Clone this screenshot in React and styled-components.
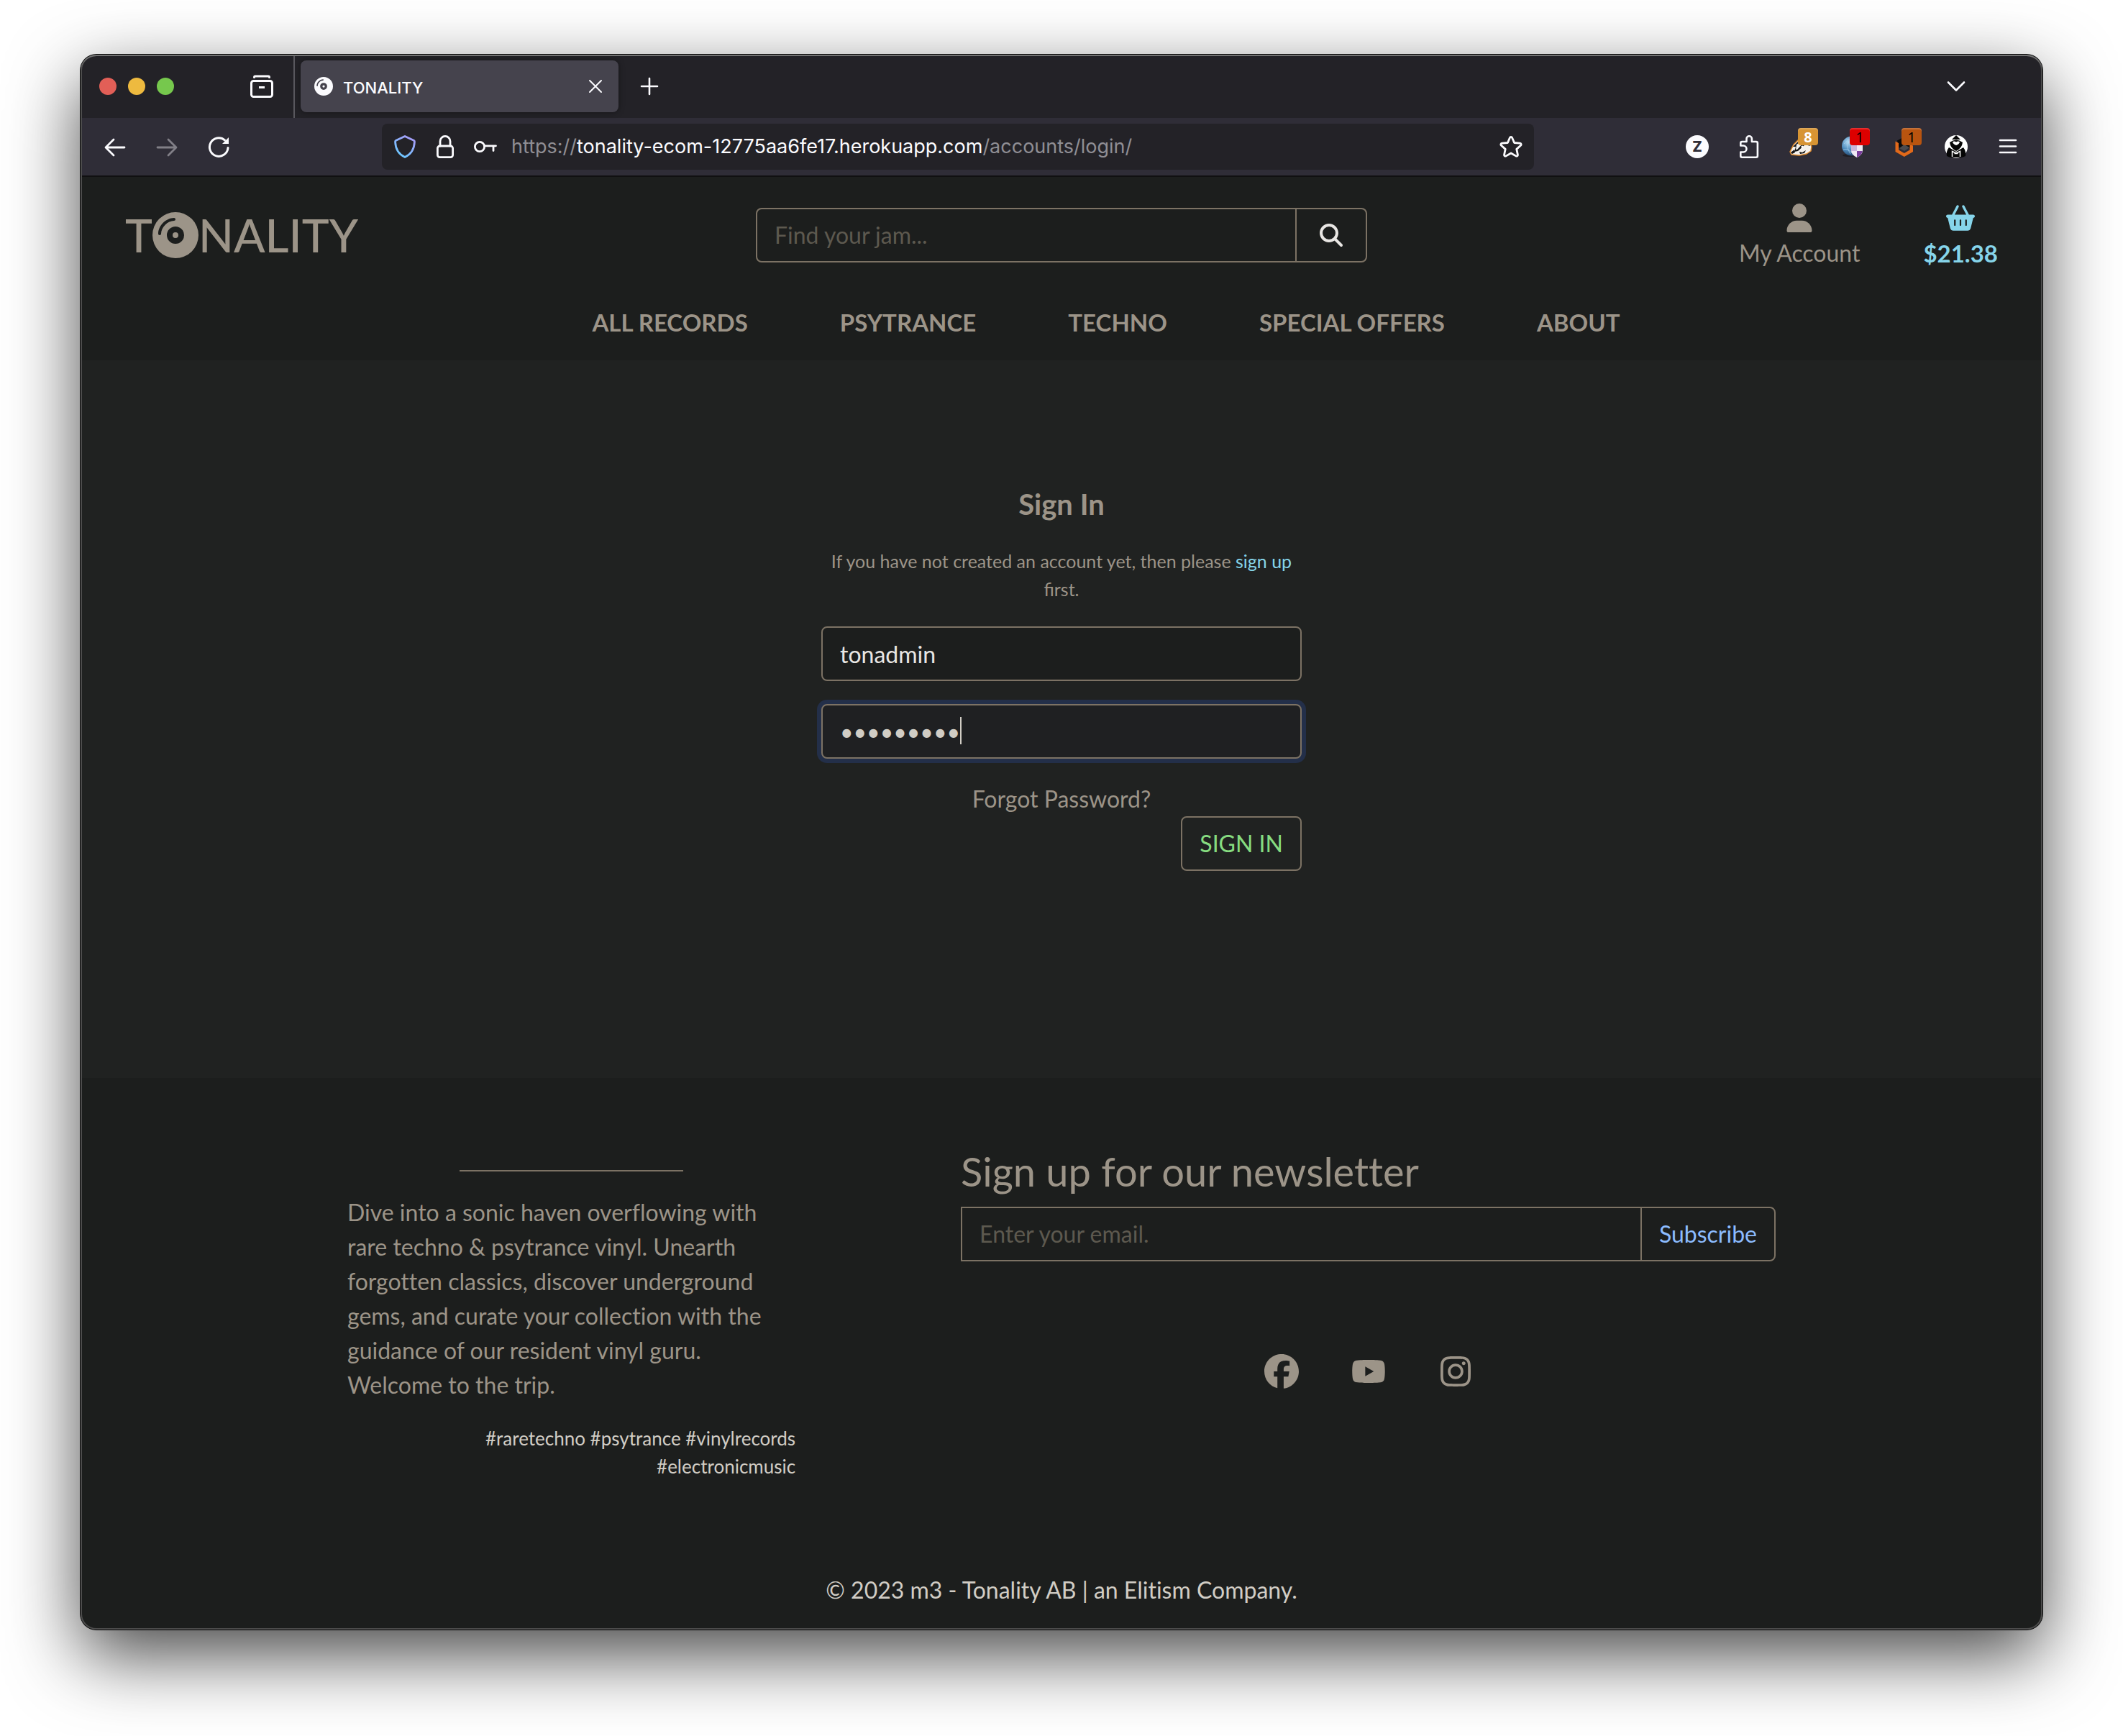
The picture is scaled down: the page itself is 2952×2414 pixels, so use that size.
import React from "react";
import styled, { createGlobalStyle } from "styled-components";
import {
  FaBasketShopping,
  FaCompactDisc,
  FaFacebook,
  FaInstagram,
  FaMagnifyingGlass,
  FaUser,
  FaYoutube,
} from "react-icons/fa6";

const color = {
  tabStrip: "#232227",
  toolbar: "#2f2d37",
  tab: "#45434d",
  chromeText: "#fbfbfe",
  chromeMuted: "#8f8e94",
  surface: "#1c1e1d",
  page: "#202221",
  text: "#9c9488",
  light: "#d1cdc5",
  bright: "#e8e6e3",
  placeholder: "#5d594f",
  line: "#7c7264",
  sky: "#86d5ea",
  green: "#86dc80",
  blue: "#8cbcff",
};

const GlobalStyle = createGlobalStyle`
  *, *::before, *::after { box-sizing: border-box; }
  body { margin: 0; background: #fff; }
  h1, h2, p { margin: 0; font-weight: inherit; }
  a { color: inherit; text-decoration: none; }
  button, input { font: inherit; color: inherit; margin: 0; }
  button { background: none; border: 0; padding: 0; cursor: pointer; }
  svg { display: block; flex: none; }
`;

const Desktop = styled.div`
  padding: 76px 112px 148px;
`;

const Window = styled.div`
  position: relative;
  border-radius: 22px;
  overflow: hidden;
  color: ${color.text};
  background: ${color.surface};
  font: 400 32px/48px Lato, sans-serif;
  font-variant-ligatures: no-common-ligatures;
  &::after {
    content: "";
    position: absolute;
    inset: 0;
    border-radius: 22px;
    pointer-events: none;
    box-shadow: inset 0 2px 0 0 #737373, inset 0 0 0 2px #4c4c4c;
  }
`;

const Shadow = styled.div`
  border-radius: 22px;
  box-shadow: 0 0 0 1px #050505, 0 36px 100px rgba(0, 0, 0, 0.72);
`;

/* Browser chrome */

const TabStrip = styled.div`
  display: flex;
  align-items: center;
  height: 88px;
  padding: 0 104px 0 26px;
  background: ${color.tabStrip};
  color: ${color.chromeText};
  font: 500 22px/32px Inter, sans-serif;
`;

const Lights = styled.div`
  display: flex;
  gap: 16px;
  margin-right: 106px;
`;

const Light = styled.button`
  width: 24px;
  height: 24px;
  border-radius: 50%;
  background: ${(p) => p.$fill};
`;

const IconButton = styled.button`
  position: relative;
  display: grid;
  place-items: center;
  flex: none;
  width: 32px;
  height: 32px;
  opacity: ${(p) => (p.$dim ? 0.4 : 1)};
`;

const StripDivider = styled.div`
  align-self: stretch;
  width: 2px;
  margin: 0 8px 0 28px;
  background: #59585e;
`;

const Tab = styled.div`
  display: flex;
  align-items: center;
  gap: 14px;
  width: 442px;
  height: 72px;
  margin-right: 27px;
  padding: 0 16px 0 19px;
  border-radius: 8px;
  background: ${color.tab};
  box-shadow: 0 0 8px rgba(0, 0, 0, 0.4);
`;

const TabTitle = styled.span`
  flex: 1;
  padding-top: 4px;
`;

const Push = styled.div`
  flex: 1;
`;

const Toolbar = styled.div`
  display: flex;
  align-items: center;
  height: 82px;
  padding: 0 32px;
  background: ${color.toolbar};
  color: ${color.chromeText};
  border-bottom: 2px solid #101011;
`;

const ToolGroup = styled.div`
  display: flex;
  gap: 40px;
`;

const AddressBar = styled.div`
  display: flex;
  align-items: center;
  gap: 20px;
  flex: 1;
  height: 64px;
  margin: 0 211px;
  padding: 0 16px;
  border-radius: 8px;
  background: ${color.tabStrip};
`;

const SiteIcons = styled.div`
  display: flex;
  gap: 24px;
`;

const Url = styled.div`
  flex: 1;
  overflow: hidden;
  white-space: nowrap;
  font: 400 27px/40px Inter, sans-serif;
  color: ${color.chromeMuted};
`;

const Host = styled.span`
  color: ${color.chromeText};
`;

const Badge = styled.span`
  position: absolute;
  left: 12px;
  top: -10px;
  width: 28px;
  height: 24px;
  border-radius: 4px;
  background: ${(p) => p.$fill};
  color: ${(p) => p.$ink};
  box-shadow: inset 0 2px 0 rgba(255, 255, 255, 0.18);
  font: ${(p) => p.$weight} 20px/25px "Noto Sans", sans-serif;
  text-align: center;
`;

const Initial = styled.span`
  display: grid;
  place-items: center;
  width: 32px;
  height: 32px;
  border-radius: 50%;
  background: ${color.chromeText};
  color: ${color.toolbar};
  font: 800 20px/32px Inter, sans-serif;
`;

/* Shop header */

const Header = styled.header`
  padding: 32px 62px 29px;
  background: ${color.surface};
`;

const HeaderRow = styled.div`
  display: grid;
  grid-template-columns: 1fr minmax(0, 850px) 1fr;
  align-items: center;
`;

const Logo = styled.a`
  display: flex;
  align-items: center;
  font-size: 64px;
  font-weight: 500;
  line-height: 76px;
`;

const FieldGroup = styled.form`
  display: flex;
  height: 76px;
  border: 2px solid ${color.line};
  border-radius: ${(p) => (p.$squareLeft ? "0 8px 8px 0" : "8px")};
`;

const GroupInput = styled.input`
  flex: 1;
  min-width: 0;
  padding: 0 24px;
  border: 0;
  outline: 0;
  background: transparent;
  color: ${color.bright};
  &::placeholder {
    color: ${color.placeholder};
    opacity: 1;
  }
`;

const GroupButton = styled.button`
  display: grid;
  place-items: center;
  padding: 0 ${(p) => (p.$wide ? 32 : 24)}px;
  border-left: 2px solid ${color.line};
  color: ${(p) => p.$ink};
`;

const Shortcuts = styled.div`
  display: flex;
  justify-content: flex-end;
  gap: 88px;
`;

const Shortcut = styled.a`
  display: flex;
  flex-direction: column;
  align-items: center;
  color: ${(p) => (p.$active ? color.sky : color.text)};
  font-size: ${(p) => (p.$active ? 33 : 32)}px;
  font-weight: ${(p) => (p.$active ? 700 : 400)};
`;

const ShortcutIcon = styled.span`
  display: grid;
  place-items: center;
  height: 50px;
`;

const Nav = styled.nav`
  display: flex;
  justify-content: center;
  gap: 128px;
  padding: 48px 0 0 124px;
  font-size: 33px;
  font-weight: 700;
`;

/* Sign-in */

const Main = styled.main`
  padding: 176px 0 288px;
  background: ${color.page};
`;

const SignIn = styled.form`
  display: flex;
  flex-direction: column;
  align-items: center;
  width: 668px;
  margin: 0 auto;
`;

const Title = styled.h1`
  font-size: 40px;
  font-weight: 700;
`;

const Hint = styled.p`
  margin: 36px 0 32px;
  font-size: 25px;
  font-variant-ligatures: normal;
  line-height: 39px;
  text-align: center;
  a {
    color: ${color.sky};
  }
`;

const Field = styled.label`
  position: relative;
  display: block;
  width: 100%;
  margin-bottom: 32px;
`;

const TextInput = styled.input`
  display: block;
  width: 100%;
  height: 76px;
  padding: 0 24px;
  border: 2px solid ${color.line};
  border-radius: 8px;
  outline: 0;
  background: ${(p) => (p.$focused ? "#1f2022" : color.surface)};
  color: ${(p) => (p.$focused ? color.light : color.bright)};
  box-shadow: ${(p) => (p.$focused ? "0 0 0 6px #232f49" : "none")};
`;

const Caret = styled.span`
  position: absolute;
  left: 193px;
  top: 18px;
  width: 2px;
  height: 38px;
  background: ${color.light};
`;

const SubmitButton = styled.button`
  align-self: flex-end;
  height: 76px;
  padding: 0 24px;
  border: 2px solid ${color.line};
  border-radius: 8px;
  color: ${color.green};
`;

/* Footer */

const Footer = styled.footer`
  padding: 96px 0 31px;
  background: ${color.surface};
`;

const FooterGrid = styled.div`
  display: grid;
  grid-template-columns: 11fr 20fr;
  gap: 230px;
  padding: 0 13.6%;
`;

const About = styled.section`
  padding-top: 32px;
`;

const Rule = styled.hr`
  width: 50%;
  height: 2px;
  margin: 0 auto 33px;
  border: 0;
  background: ${color.line};
`;

const Tags = styled.p`
  margin-top: 31px;
  color: ${color.light};
  font-size: 26px;
  line-height: 39px;
  text-align: right;
`;

const NewsletterTitle = styled.h2`
  margin-bottom: 16px;
  font-size: 56px;
  line-height: 67px;
`;

const Socials = styled.div`
  display: flex;
  justify-content: center;
  gap: 73px;
  margin-top: 129px;
  font-size: 48px;
`;

const Copyright = styled.p`
  margin-top: 128px;
  color: ${color.light};
  text-align: center;
`;

/* Icons */

const Line = ({ size = 32, width = 3, children, ...rest }) => (
  <svg
    width={size}
    height={size}
    viewBox="0 0 32 32"
    fill="none"
    stroke="currentColor"
    strokeWidth={width}
    strokeLinecap="round"
    strokeLinejoin="round"
    {...rest}
  >
    {children}
  </svg>
);

const Archive = () => (
  <Line>
    <path d="M5.500 3.500Q5.500 2 7 2h18Q26.500 2 26.500 3.500" />
    <rect x="1.500" y="8.500" width="29" height="22" rx="3" />
    <path d="M12 17.500h8" strokeLinecap="butt" />
  </Line>
);

const Reload = () => (
  <Line>
    <path d="M29 17.500A12.800 12.800 0 1 1 24.500 6.800" />
    <path d="M30 3V12H21Z" fill="currentColor" stroke="none" />
  </Line>
);

const Shield = () => (
  <svg width="32" height="32" viewBox="0 0 32 32" fill="none">
    <defs>
      <linearGradient id="shieldStroke" x1="24" y1="2" x2="8" y2="26" gradientUnits="userSpaceOnUse">
        <stop offset="0" stopColor="#a79cf8" />
        <stop offset="1" stopColor="#6fc5ff" />
      </linearGradient>
    </defs>
    <path
      d="M16 1.500L28.300 7.200Q29.600 8 29.400 9.500C29 19 24.500 26.500 16 30.500C7.500 26.500 3 19 2.600 9.500Q2.400 8 3.700 7.200Z"
      stroke="url(#shieldStroke)"
      strokeWidth="2.800"
      strokeLinejoin="round"
    />
  </svg>
);

const Lock = () => (
  <Line width={2.8}>
    <rect x="5.400" y="15" width="21.200" height="15.600" rx="3" />
    <path d="M9 15V8.400a7 7 0 0 1 14 0V15" />
  </Line>
);

const Key = () => (
  <Line width={2.8}>
    <circle cx="8" cy="16" r="6.600" />
    <path d="M14.600 14.800H30.500M27 15v6.500" />
  </Line>
);

const Star = () => (
  <Line width={2.8}>
    <path d="M16 2.300c.8 0 1.300.5 1.600 1.200l3 7 7.700.7c1.700.2 2.400 1.800 1.200 3l-5.700 5.200 1.600 7.700c.3 1.600-1.200 2.600-2.600 1.800L16 25l-6.800 3.900c-1.400.8-2.900-.2-2.600-1.800l1.600-7.700-5.700-5.200c-1.200-1.200-.5-2.800 1.200-3l7.700-.7 3-7c.3-.7.8-1.200 1.600-1.200z" />
  </Line>
);

const Puzzle = () => (
  <Line width={2.6}>
    <path d="M4.300 14.500V11a2 2 0 0 1 2-2H12.500V5a3.700 3.700 0 0 1 7.400 0V9h6a2 2 0 0 1 2 2v17.700a2 2 0 0 1-2 2H6.300a2 2 0 0 1-2-2V23.500H8a4.500 4.500 0 0 0 0-9Z" />
  </Line>
);

const Badger = () => (
  <svg width="32" height="32" viewBox="0 0 32 32">
    <path d="M1 23L6 13L14 5L27 7L31 16L30 22L24 26L14 28L3 27Z" fill="#f4f1ec" stroke="#e08a2c" strokeWidth="1.500" strokeLinejoin="round" />
    <path d="M5 16L14 7L25 8L29 15L22 13L12 22L7 23L9 16Z" fill="#151414" />
    <path d="M10 13L17 8L20 10L11 20L9 20Z" fill="#f4f1ec" />
    <path d="M2 24l5-4 1 4-4 2zM14 23l4 1 5-3-2 4-6 1z" fill="#151414" />
    <circle cx="18" cy="16" r="1.600" fill="#fff" />
  </svg>
);

const Globe = () => (
  <svg width="32" height="32" viewBox="0 0 32 32">
    <defs>
      <radialGradient id="globeFill" cx=".35" cy=".3" r=".8">
        <stop offset="0" stopColor="#b5dcf4" />
        <stop offset=".5" stopColor="#4f8dc0" />
        <stop offset="1" stopColor="#17375e" />
      </radialGradient>
    </defs>
    <ellipse cx="12" cy="28" rx="10" ry="2" fill="#1f1e25" />
    <circle cx="14.500" cy="15" r="13.500" fill="url(#globeFill)" />
    <path d="M4 12q5-7 12-8M3 20q8-2 12 5M9 6q-3 9 4 20" fill="none" stroke="#a9d1ec" strokeWidth="1" opacity=".7" />
    <path d="M14 14q8-3 16 0v8q-1 6-8 9-7-3-8-9z" fill="#efe9f3" />
    <path d="M14 14q4-1.500 8-1.500V22h-8z" fill="#c9b6da" />
    <path d="M22 22h7.800q-1 6-7.800 9z" fill="#7b3f9c" />
  </svg>
);

const Hexagon = () => (
  <svg width="32" height="32" viewBox="0 0 32 32">
    <path d="M6 7.500L16 2L28 8V20L16 14L9 18Z" fill="#0b0b0b" />
    <path d="M9 18L16 13L23 17L16 22Z" fill="#4b4b4f" />
    <path d="M3.500 8.500L8 11V20.500L15.800 25L23.500 20.500V12L28 14.500V23L15.800 30L3.500 23Z" fill="#e2691a" />
  </svg>
);

const Cloak = () => (
  <svg width="32" height="32" viewBox="0 0 32 32">
    <circle cx="16" cy="16" r="16" fill="#fff" />
    <path d="M16 0L22 6H10Z" fill="#050505" />
    <path d="M7 10Q16 3 25 10Q24 18 16 22Q8 18 7 10Z" fill="#050505" />
    <path d="M11 9.500Q13 7.500 16 9.500Q19 7.500 21 9.500Q20 12.500 16 14Q12 12.500 11 9.500Z" fill="#fff" />
    <path d="M6 17L16 23L26 17Q30 22 29 29Q25 31 23 31H9Q7 31 3 29Q2 22 6 17Z" fill="#050505" />
    <path d="M10.500 30V22.500L16 25L21.500 22.500V30M13.500 25.500h5" fill="none" stroke="#fff" strokeWidth="1.500" />
  </svg>
);

const tools = [
  { label: "Extensions", icon: <Puzzle /> },
  { label: "Privacy Badger", icon: <Badger />, badge: { text: "8", $fill: "#d79433", $ink: "#fff", $weight: 700 } },
  { label: "Site protection", icon: <Globe />, badge: { text: "1", $fill: "#dd0000", $ink: "#000", $weight: 400 } },
  { label: "Blocker", icon: <Hexagon />, badge: { text: "1", $fill: "#b9540f", $ink: "#000", $weight: 400 } },
  { label: "Incognito cloak", icon: <Cloak /> },
];

const links = ["ALL RECORDS", "PSYTRANCE", "TECHNO", "SPECIAL OFFERS", "ABOUT"];

function BrowserChrome() {
  return (
    <>
      <TabStrip>
        <Lights>
          <Light $fill="#e25f57" aria-label="Close window" />
          <Light $fill="#eeba3f" aria-label="Minimize window" />
          <Light $fill="#76c84d" aria-label="Zoom window" />
        </Lights>
        <IconButton aria-label="Recent tabs"><Archive /></IconButton>
        <StripDivider />
        <Tab>
          <FaCompactDisc size={26} />
          <TabTitle>TONALITY</TabTitle>
          <IconButton aria-label="Close tab">
            <Line width={2}><path d="M8 8l16 16M24 8L8 24" /></Line>
          </IconButton>
        </Tab>
        <IconButton aria-label="New tab">
          <Line width={2.6}><path d="M16 5v22M5 16h22" /></Line>
        </IconButton>
        <Push />
        <IconButton aria-label="List all tabs">
          <Line width={2.6}><path d="M5 10.500l11 11 11-11" /></Line>
        </IconButton>
      </TabStrip>
      <Toolbar>
        <ToolGroup>
          <IconButton aria-label="Back">
            <Line width={2.8}><path d="M29 17H3.500M14 6L3 17l11 11" /></Line>
          </IconButton>
          <IconButton $dim aria-label="Forward">
            <Line width={2.8}><path d="M3 17h25.500M18 6l11 11-11 11" /></Line>
          </IconButton>
          <IconButton aria-label="Reload"><Reload /></IconButton>
        </ToolGroup>
        <AddressBar>
          <SiteIcons>
            <Shield />
            <Lock />
            <Key />
          </SiteIcons>
          <Url>
            https://<Host>tonality-ecom-12775aa6fe17.herokuapp.com</Host>/accounts/login/
          </Url>
          <IconButton aria-label="Bookmark this page"><Star /></IconButton>
        </AddressBar>
        <ToolGroup>
          <IconButton aria-label="Account"><Initial>Z</Initial></IconButton>
          {tools.map(({ label, icon, badge }) => (
            <IconButton key={label} aria-label={label}>
              {icon}
              {badge && (
                <Badge $fill={badge.$fill} $ink={badge.$ink} $weight={badge.$weight}>{badge.text}</Badge>
              )}
            </IconButton>
          ))}
          <IconButton aria-label="Menu">
            <Line width={2.6}><path d="M5 7h22M5 15.500h22M5 24h22" /></Line>
          </IconButton>
        </ToolGroup>
      </Toolbar>
    </>
  );
}

function ShopHeader() {
  return (
    <Header>
      <HeaderRow>
        <Logo href="#" aria-label="Tonality">
          <span>T</span>
          <FaCompactDisc size={64} />
          <span>NALITY</span>
        </Logo>
        <FieldGroup>
          <GroupInput type="search" placeholder="Find your jam..." aria-label="Search" />
          <GroupButton $wide $ink={color.bright} type="button" aria-label="Search records">
            <FaMagnifyingGlass size={32} />
          </GroupButton>
        </FieldGroup>
        <Shortcuts>
          <Shortcut href="#">
            <ShortcutIcon><FaUser size={40} /></ShortcutIcon>
            My Account
          </Shortcut>
          <Shortcut $active href="#">
            <ShortcutIcon><FaBasketShopping size={40} /></ShortcutIcon>
            $21.38
          </Shortcut>
        </Shortcuts>
      </HeaderRow>
      <Nav>
        {links.map((label) => (
          <a key={label} href="#">{label}</a>
        ))}
      </Nav>
    </Header>
  );
}

export default function App() {
  return (
    <Desktop>
      <GlobalStyle />
      <Shadow>
        <Window>
          <BrowserChrome />
          <ShopHeader />
          <Main>
            <SignIn>
              <Title>Sign In</Title>
              <Hint>
                If you have not created an account yet, then please <a href="#">sign up</a> first.
              </Hint>
              <Field>
                <TextInput type="text" defaultValue="tonadmin" aria-label="Username" />
              </Field>
              <Field>
                <TextInput $focused type="password" defaultValue="vinylfans" aria-label="Password" />
                <Caret />
              </Field>
              <a href="#">Forgot Password?</a>
              <SubmitButton type="button">SIGN IN</SubmitButton>
            </SignIn>
          </Main>
          <Footer>
            <FooterGrid>
              <About>
                <Rule />
                <p>
                  Dive into a sonic haven overflowing with rare techno &amp; psytrance vinyl. Unearth
                  forgotten classics, discover underground gems, and curate your collection with the
                  guidance of our resident vinyl guru. Welcome to the trip.
                </p>
                <Tags>#raretechno #psytrance #vinylrecords #electronicmusic</Tags>
              </About>
              <section>
                <NewsletterTitle>Sign up for our newsletter</NewsletterTitle>
                <FieldGroup $squareLeft>
                  <GroupInput type="email" placeholder="Enter your email." aria-label="Email" />
                  <GroupButton $ink={color.blue} type="button">Subscribe</GroupButton>
                </FieldGroup>
                <Socials>
                  <a href="#" aria-label="Facebook"><FaFacebook /></a>
                  <a href="#" aria-label="YouTube"><FaYoutube /></a>
                  <a href="#" aria-label="Instagram"><FaInstagram /></a>
                </Socials>
              </section>
            </FooterGrid>
            <Copyright>© 2023 m3 - Tonality AB | an Elitism Company.</Copyright>
          </Footer>
        </Window>
      </Shadow>
    </Desktop>
  );
}
